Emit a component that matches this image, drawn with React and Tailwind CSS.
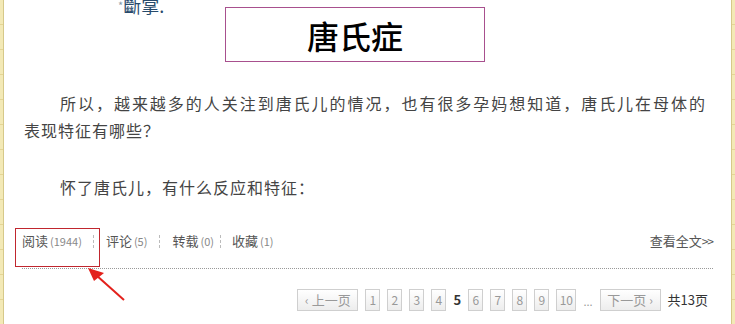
import React from 'react'

const pages = ['1', '2', '3', '4']
const pagesAfter = ['6', '7', '8', '9']

function PageBox({ children, wide }) {
  return (
    <span
      className={`flex items-center justify-center h-[22px] ${wide ? 'w-[20px]' : 'w-[15px]'} border border-[#cfcfcf] bg-gradient-to-b from-white to-[#ededed] text-[12px] text-[#999]`}
    >
      {children}
    </span>
  )
}

function Stat({ label, count }) {
  return (
    <span className="flex items-baseline">
      <span className="text-[13px] text-[#555]">{label}</span>
      <span className="text-[11px] text-[#888] ml-[2px]">({count})</span>
    </span>
  )
}

function Sep() {
  return <span className="block h-[13px] w-0 border-l border-dashed border-[#bbb]" />
}

export default function App() {
  const stripe =
    'bg-[repeating-linear-gradient(180deg,#f3e9b6_0px,#f3e9b6_24px,#e4d595_24px,#e4d595_25px)]'

  return (
    <div
      className="w-[735px] h-[324px] overflow-hidden flex bg-white"
      style={{ fontFamily: '"Noto Sans CJK SC", "Noto Sans", sans-serif' }}
    >
      {/* left paper edge */}
      <div className={`w-[3px] shrink-0 ${stripe}`} />
      <div className="w-px shrink-0 bg-[#d6c98a]" />

      {/* article */}
      <div className="relative flex-1 flex flex-col">
        {/* caption from the picture above, cut at the top */}
        <div className="h-[7px] overflow-visible">
          <div className="ml-[114px] -mt-[4px] flex items-end leading-[18px]">
            <span className="text-[11px] text-[#8a9aaa]">*</span>
            <span className="text-[18px] text-[#274a6b]" style={{ fontFamily: '"Noto Sans CJK TC", sans-serif' }}>
              斷掌
            </span>
            <span className="text-[18px] text-[#274a6b]">.</span>
          </div>
        </div>

        {/* title box */}
        <div className="ml-[221px] w-[260px] h-[55px] border border-[#a8508e] flex items-center justify-center">
          <span className="text-[32px] font-medium text-black leading-none">唐氏症</span>
        </div>

        {/* body */}
        <div className="mt-[28px] pl-[20px] pr-[25px] text-[16px] leading-[27px] tracking-[1px] text-[#444]">
          <div className="pl-[36px] text-justify [text-align-last:justify]">
            所以，越来越多的人关注到唐氏儿的情况，也有很多孕妈想知道，唐氏儿在母体的
          </div>
          <div>表现特征有哪些？</div>
          <div className="mt-[30px] pl-[36px]">怀了唐氏儿，有什么反应和特征：</div>
        </div>

        {/* stats row */}
        <div className="mt-[30px] ml-[18px] mr-[18px] h-[20px] flex items-center">
          <Stat label="阅读" count="1944" />
          <span className="ml-[11px]"><Sep /></span>
          <span className="ml-[12px]"><Stat label="评论" count="5" /></span>
          <span className="ml-[12px]"><Sep /></span>
          <span className="ml-[12px]"><Stat label="转载" count="0" /></span>
          <span className="ml-[6px]"><Sep /></span>
          <span className="ml-[11px]"><Stat label="收藏" count="1" /></span>
          <span className="ml-auto text-[13px] text-[#555]">
            查看全文<span className="text-[12px] tracking-[-1px]">&gt;&gt;</span>
          </span>
        </div>

        {/* dotted rule */}
        <div className="mt-[17px] ml-[18px] mr-[18px] border-t border-dotted border-[#999]" />

        {/* pager */}
        <div className="mt-[20px] mr-[23px] flex items-center justify-end gap-[7px]">
          <span className="flex items-center justify-center gap-[3px] h-[22px] w-[61px] border border-[#cfcfcf] bg-gradient-to-b from-white to-[#ededed] text-[13px] text-[#999]">
            <span className="text-[12px]">‹</span>上一页
          </span>
          {pages.map(p => (
            <PageBox key={p}>{p}</PageBox>
          ))}
          <span className="w-[8px] text-center text-[13px] font-bold text-[#333]">5</span>
          {pagesAfter.map(p => (
            <PageBox key={p}>{p}</PageBox>
          ))}
          <PageBox wide>10</PageBox>
          <span className="text-[11px] text-[#999] leading-none self-end mb-[4px]">...</span>
          <span className="flex items-center justify-center gap-[3px] h-[22px] w-[61px] border border-[#cfcfcf] bg-gradient-to-b from-white to-[#ededed] text-[13px] text-[#999]">
            下一页<span className="text-[12px]">›</span>
          </span>
          <span className="text-[13px] text-[#333]">共13页</span>
        </div>

        {/* red annotation box + arrow */}
        <div className="absolute left-[11px] top-[228px] w-[85px] h-[39px] border border-[#c0262e]" />
        <svg className="absolute left-[78px] top-[262px]" width="50" height="44" viewBox="0 0 50 44">
          <line x1="42" y1="38" x2="14" y2="13" stroke="#e3211c" strokeWidth="2" />
          <polygon points="6,6 22,11 12,19" fill="#e3211c" />
        </svg>
      </div>

      {/* right paper edge */}
      <div className="w-px shrink-0 bg-[#d6c98a]" />
      <div className={`w-[3px] shrink-0 ${stripe}`} />
    </div>
  )
}
